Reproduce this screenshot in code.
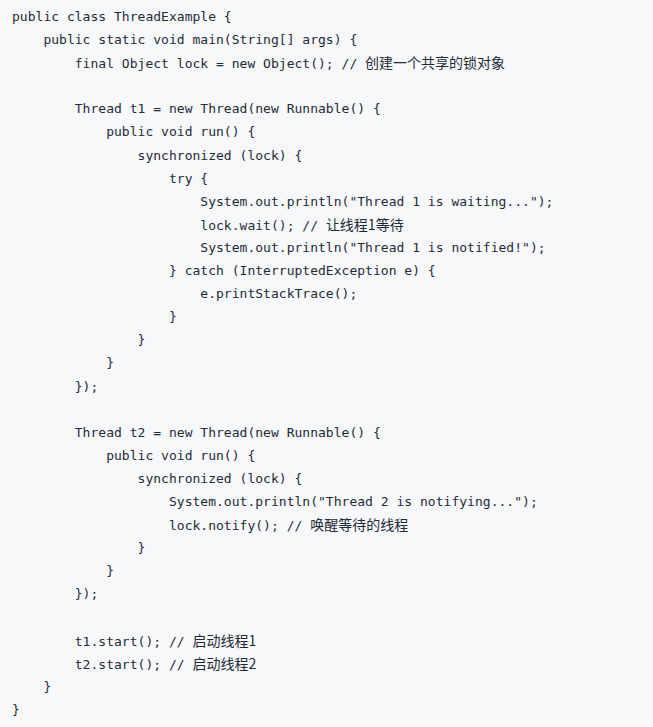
import React from "react";

type Line = { code: string; note?: string };

const lines: Line[] = [
  { code: "public class ThreadExample {" },
  { code: "    public static void main(String[] args) {" },
  { code: "        final Object lock = new Object(); // ", note: "创建一个共享的锁对象" },
  { code: "" },
  { code: "        Thread t1 = new Thread(new Runnable() {" },
  { code: "            public void run() {" },
  { code: "                synchronized (lock) {" },
  { code: "                    try {" },
  { code: '                        System.out.println("Thread 1 is waiting...");' },
  { code: "                        lock.wait(); // ", note: "让线程1等待" },
  { code: '                        System.out.println("Thread 1 is notified!");' },
  { code: "                    } catch (InterruptedException e) {" },
  { code: "                        e.printStackTrace();" },
  { code: "                    }" },
  { code: "                }" },
  { code: "            }" },
  { code: "        });" },
  { code: "" },
  { code: "        Thread t2 = new Thread(new Runnable() {" },
  { code: "            public void run() {" },
  { code: "                synchronized (lock) {" },
  { code: '                    System.out.println("Thread 2 is notifying...");' },
  { code: "                    lock.notify(); // ", note: "唤醒等待的线程" },
  { code: "                }" },
  { code: "            }" },
  { code: "        });" },
  { code: "" },
  { code: "        t1.start(); // ", note: "启动线程1" },
  { code: "        t2.start(); // ", note: "启动线程2" },
  { code: "    }" },
  { code: "}" },
];

export default function App() {
  return (
    <div className="w-full h-[727px] bg-[#f7f8fa] overflow-hidden">
      <pre className="pl-[12px] pt-[5px] font-['DejaVu_Sans_Mono',monospace] text-[13px] leading-[23.1px] tracking-[0.02px] text-[#1f2a37]">
        {lines.map((l, i) => (
          <div key={i} className="h-[23.1px] whitespace-pre">
            {l.code}
            {l.note && (
              <span className="font-['Noto_Sans_CJK_SC',sans-serif] text-[14px] tracking-normal">
                {l.note}
              </span>
            )}
          </div>
        ))}
      </pre>
    </div>
  );
}
